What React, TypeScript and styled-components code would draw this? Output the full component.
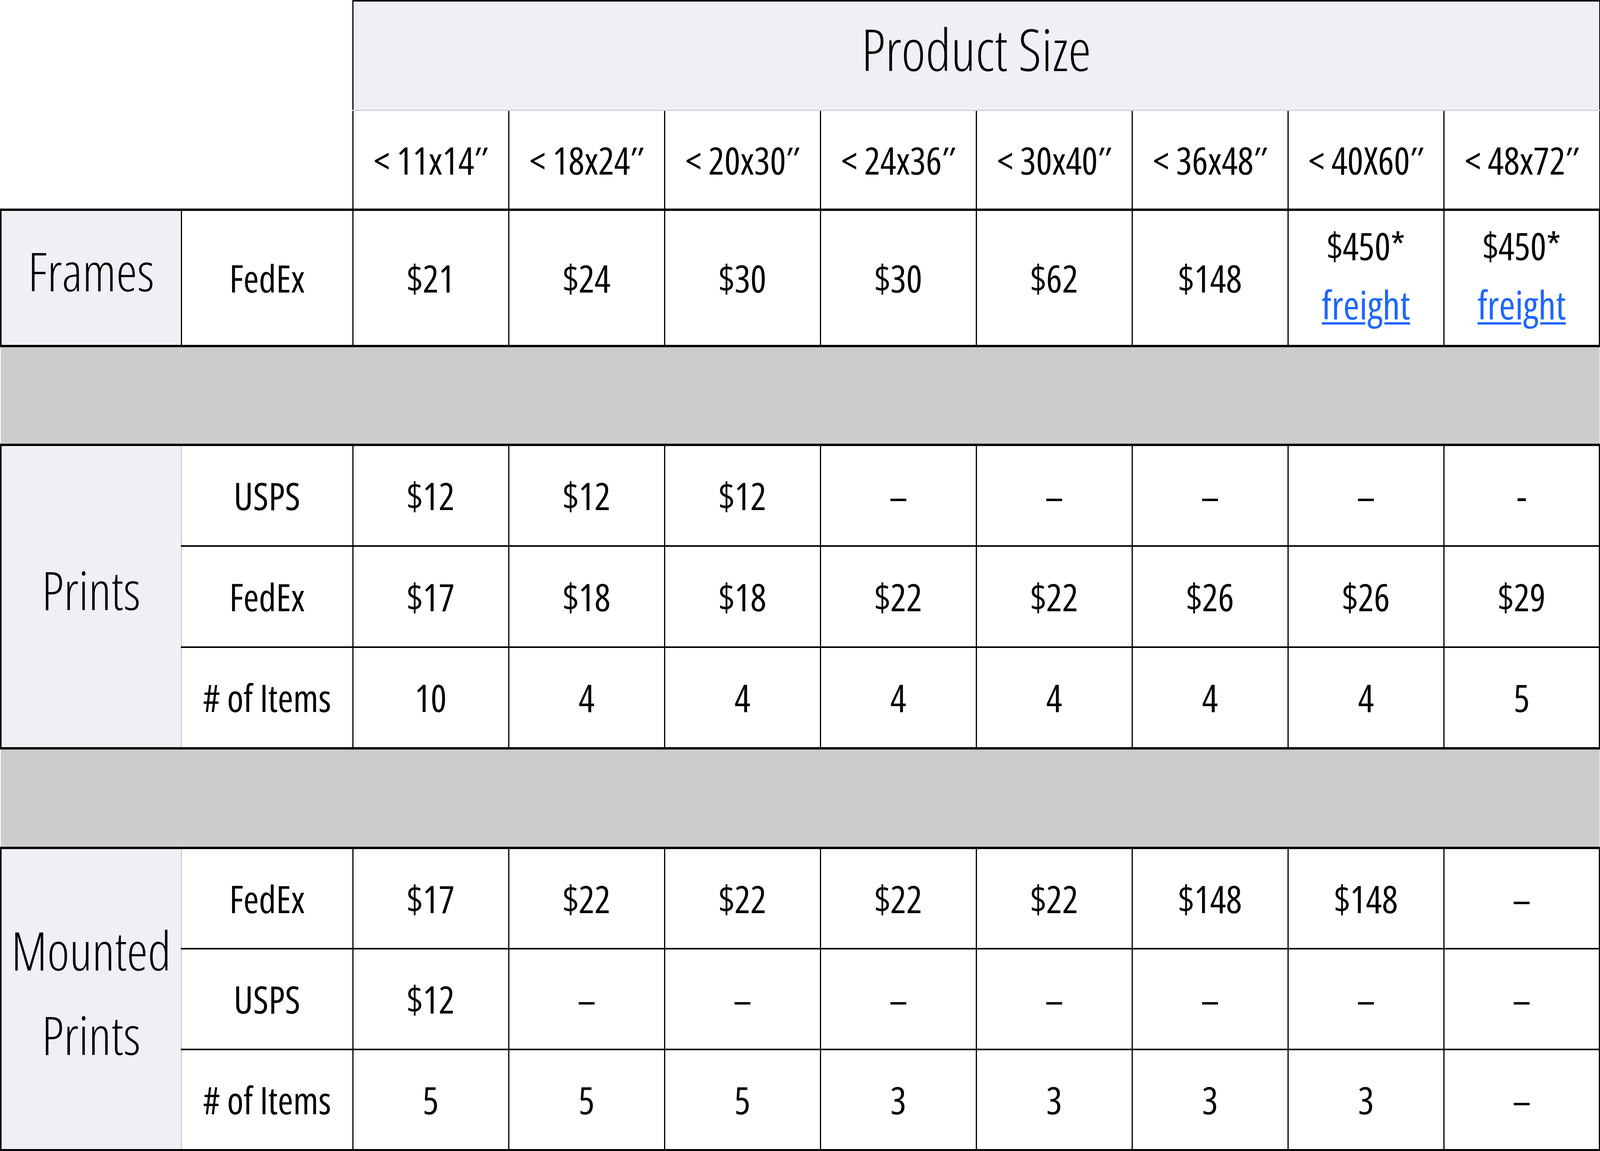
import React from 'react'
import styled, { createGlobalStyle } from 'styled-components'

// widths follow the 6250px wide shot, heights the 2947px tall one
const x = (n: number) => `${(n / 62.5).toFixed(4)}vw`
const y = (n: number) => `${(n / 29.47).toFixed(4)}vh`

const GlobalStyle = createGlobalStyle`
  html, body {
    margin: 0;
    padding: 0;
    background: #fff;
    overflow: hidden;
  }
`

const FONT = `"Open Sans", Roboto, "Liberation Sans", Arial, sans-serif`
const PANEL = '#eff0f5'

// horizontal rules are thicker than vertical ones, as in the shot
const Table = styled.table`
  border-collapse: collapse;
  table-layout: fixed;
  width: ${x(6246)};
  font-family: ${FONT};
  font-stretch: 75%;
  font-size: ${y(96)};
  color: #000;
`

const Col = styled.col<{ $w: number }>`
  width: ${({ $w }) => x($w)};
`

const Head = styled.thead``

const Section = styled.tbody`
  border-top: 6px solid #000;
  border-bottom: 6px solid #000;
  border-left: 4px solid #000;
  border-right: 4px solid #000;
`

const Spacer = styled.tbody``

const Row = styled.tr<{ $h: number }>`
  height: ${({ $h }) => y($h)};
`

const Blank = styled.td`
  border: none;
  padding: 0;
`

const TitleCell = styled.th`
  background: ${PANEL};
  border-top: 4px solid #000;
  border-left: 3px solid #000;
  border-right: 3px solid #000;
  border-bottom: 3px solid #d3d3d3;
  padding: 0 0 ${y(36)};
  font-weight: 300;
  font-size: ${y(148)};
  text-align: center;
  vertical-align: middle;
`

const SizeCell = styled.th`
  border-left: 3px solid #000;
  border-right: 3px solid #000;
  padding: 0;
  font-weight: 400;
  line-height: 1.2;
  text-align: center;
  vertical-align: middle;
`

const GroupLabel = styled.td<{ $edge: string }>`
  background: ${PANEL};
  border-right: 3px solid ${({ $edge }) => $edge};
  padding: 0 0 ${y(34)};
  font-weight: 300;
  font-size: ${y(136)};
  line-height: ${y(216)};
  text-align: center;
  vertical-align: middle;
`

const Cell = styled.td`
  border-top: 4px solid #000;
  border-bottom: 4px solid #000;
  border-left: 3px solid #000;
  border-right: 3px solid #000;
  padding: 0;
  text-align: center;
  vertical-align: middle;
  line-height: 1.2;
`

const StackedCell = styled(Cell)`
  line-height: ${y(150)};
  padding-bottom: ${y(14)};
`

const Price = styled.div``

const FreightLink = styled.a`
  display: block;
  font-size: ${y(100)};
  color: #1e66ff;
  text-decoration: underline;
  text-decoration-thickness: ${y(6)};
  text-underline-offset: ${y(7)};
`

const GrayCell = styled.td<{ $divider?: boolean }>`
  background: #cccccc;
  padding: 0;
  border: none;
  border-right: ${({ $divider }) => ($divider ? '1px solid #dedede' : 'none')};
`

const SIZES = ['< 11x14″', '< 18x24″', '< 20x30″', '< 24x36″', '< 30x40″', '< 36x48″', '< 40X60″', '< 48x72″']

type Line = { carrier: string; values: string[] }

const PRINTS: Line[] = [
  { carrier: 'USPS', values: ['$12', '$12', '$12', '–', '–', '–', '–', '-'] },
  { carrier: 'FedEx', values: ['$17', '$18', '$18', '$22', '$22', '$26', '$26', '$29'] },
  { carrier: '# of Items', values: ['10', '4', '4', '4', '4', '4', '4', '5'] },
]

const MOUNTED: Line[] = [
  { carrier: 'FedEx', values: ['$17', '$22', '$22', '$22', '$22', '$148', '$148', '–'] },
  { carrier: 'USPS', values: ['$12', '–', '–', '–', '–', '–', '–', '–'] },
  { carrier: '# of Items', values: ['5', '5', '5', '3', '3', '3', '3', '–'] },
]

const FRAMES = ['$21', '$24', '$30', '$30', '$62', '$148']

function GapRow({ h }: { h: number }) {
  return (
    <Spacer>
      <Row $h={h}>
        <GrayCell $divider />
        <GrayCell colSpan={9} />
      </Row>
    </Spacer>
  )
}

function Group({ label, lines, heights }: { label: React.ReactNode; lines: Line[]; heights: number[] }) {
  return (
    <Section>
      {lines.map((line, i) => (
        <Row key={line.carrier} $h={heights[i]}>
          {i === 0 && (
            <GroupLabel rowSpan={lines.length} $edge="#cfcfcf">
              {label}
            </GroupLabel>
          )}
          <Cell>{line.carrier}</Cell>
          {line.values.map((v, j) => (
            <Cell key={j}>{v}</Cell>
          ))}
        </Row>
      ))}
    </Section>
  )
}

export default function App() {
  const dataWidth = (6246 - 705 - 670) / 8
  return (
    <>
      <GlobalStyle />
      <Table>
        <colgroup>
          <Col $w={705} />
          <Col $w={670} />
          {SIZES.map((s) => (
            <Col key={s} $w={dataWidth} />
          ))}
        </colgroup>
        <Head>
          <Row $h={281}>
            <Blank colSpan={2} rowSpan={2} />
            <TitleCell colSpan={8}>Product Size</TitleCell>
          </Row>
          <Row $h={254}>
            {SIZES.map((s) => (
              <SizeCell key={s}>{s}</SizeCell>
            ))}
          </Row>
        </Head>
        <Section>
          <Row $h={349}>
            <GroupLabel $edge="#000">Frames</GroupLabel>
            <Cell>FedEx</Cell>
            {FRAMES.map((v, j) => (
              <Cell key={j}>{v}</Cell>
            ))}
            {[0, 1].map((k) => (
              <StackedCell key={k}>
                <Price>$450*</Price>
                <FreightLink href="#">freight</FreightLink>
              </StackedCell>
            ))}
          </Row>
        </Section>
        <GapRow h={253} />
        <Group label="Prints" lines={PRINTS} heights={[259, 259, 259]} />
        <GapRow h={255} />
        <Group
          label={
            <>
              Mounted
              <br />
              Prints
            </>
          }
          lines={MOUNTED}
          heights={[258, 258, 258]}
        />
      </Table>
    </>
  )
}
